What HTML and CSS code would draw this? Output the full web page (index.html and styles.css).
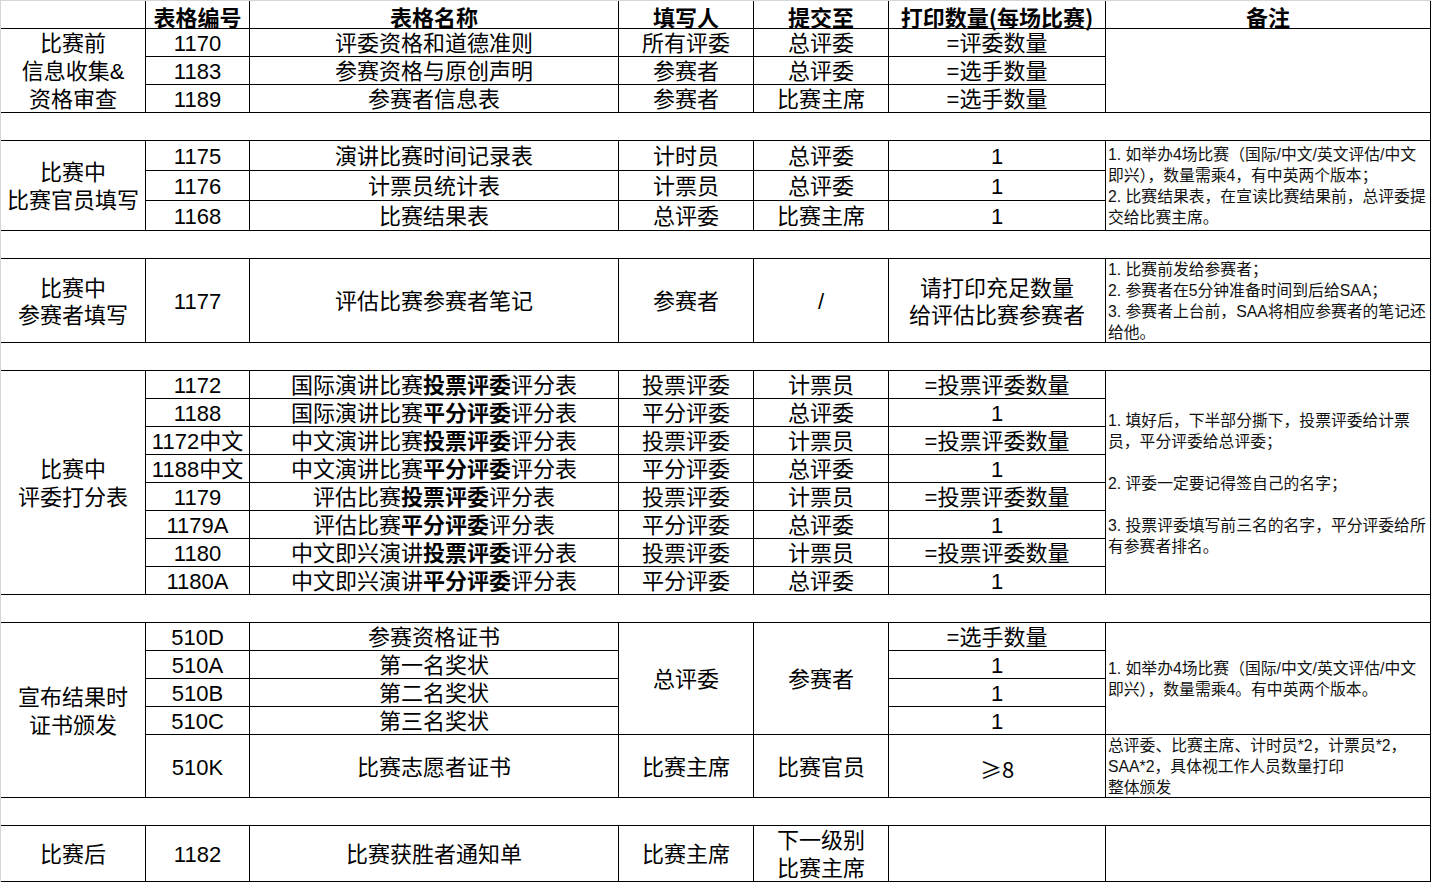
FILE: index.html
```html
<!DOCTYPE html>
<html lang="zh-CN">
<head>
<meta charset="utf-8">
<title>表格</title>
<link rel="stylesheet" href="styles.css">
</head>
<body>
<div class="sheet">
  <div class="hd"></div>
  <div class="hd">表格编号</div>
  <div class="hd">表格名称</div>
  <div class="hd">填写人</div>
  <div class="hd">提交至</div>
  <div class="hd">打印数量(每场比赛)</div>
  <div class="hd">备注</div>

  <div class="c s3 ml"><span>比赛前<br>信息收集&amp;<br>资格审查</span></div>
  <div class="c">1170</div><div class="c">评委资格和道德准则</div><div class="c">所有评委</div><div class="c">总评委</div><div class="c">=评委数量</div>
  <div class="note s3"></div>
  <div class="c">1183</div><div class="c">参赛资格与原创声明</div><div class="c">参赛者</div><div class="c">总评委</div><div class="c">=选手数量</div>
  <div class="c">1189</div><div class="c">参赛者信息表</div><div class="c">参赛者</div><div class="c">比赛主席</div><div class="c">=选手数量</div>

  <div class="gap"></div>

  <div class="c s3 ml"><span>比赛中<br>比赛官员填写</span></div>
  <div class="c">1175</div><div class="c">演讲比赛时间记录表</div><div class="c">计时员</div><div class="c">总评委</div><div class="c">1</div>
  <div class="note s3"><span>1. 如举办4场比赛（国际/中文/英文评估/中文<br>即兴），数量需乘4，有中英两个版本；<br>2. 比赛结果表，在宣读比赛结果前，总评委提<br>交给比赛主席。</span></div>
  <div class="c">1176</div><div class="c">计票员统计表</div><div class="c">计票员</div><div class="c">总评委</div><div class="c">1</div>
  <div class="c">1168</div><div class="c">比赛结果表</div><div class="c">总评委</div><div class="c">比赛主席</div><div class="c">1</div>

  <div class="gap"></div>

  <div class="c ml ml27"><span>比赛中<br>参赛者填写</span></div>
  <div class="c">1177</div><div class="c">评估比赛参赛者笔记</div><div class="c">参赛者</div><div class="c">/</div>
  <div class="c ml ml27"><span>请打印充足数量<br>给评估比赛参赛者</span></div>
  <div class="note"><span>1. 比赛前发给参赛者；<br>2. 参赛者在5分钟准备时间到后给SAA；<br>3. 参赛者上台前，SAA将相应参赛者的笔记还<br>给他。</span></div>

  <div class="gap"></div>

  <div class="c s8 ml"><span>比赛中<br>评委打分表</span></div>
  <div class="c">1172</div><div class="c"><span>国际演讲比赛<b>投票评委</b>评分表</span></div><div class="c">投票评委</div><div class="c">计票员</div><div class="c">=投票评委数量</div>
  <div class="note s8"><span>1. 填好后，下半部分撕下，投票评委给计票<br>员，平分评委给总评委；<br>&nbsp;<br>2. 评委一定要记得签自己的名字；<br>&nbsp;<br>3. 投票评委填写前三名的名字，平分评委给所<br>有参赛者排名。</span></div>
  <div class="c">1188</div><div class="c"><span>国际演讲比赛<b>平分评委</b>评分表</span></div><div class="c">平分评委</div><div class="c">总评委</div><div class="c">1</div>
  <div class="c">1172中文</div><div class="c"><span>中文演讲比赛<b>投票评委</b>评分表</span></div><div class="c">投票评委</div><div class="c">计票员</div><div class="c">=投票评委数量</div>
  <div class="c">1188中文</div><div class="c"><span>中文演讲比赛<b>平分评委</b>评分表</span></div><div class="c">平分评委</div><div class="c">总评委</div><div class="c">1</div>
  <div class="c">1179</div><div class="c"><span>评估比赛<b>投票评委</b>评分表</span></div><div class="c">投票评委</div><div class="c">计票员</div><div class="c">=投票评委数量</div>
  <div class="c">1179A</div><div class="c"><span>评估比赛<b>平分评委</b>评分表</span></div><div class="c">平分评委</div><div class="c">总评委</div><div class="c">1</div>
  <div class="c">1180</div><div class="c"><span>中文即兴演讲<b>投票评委</b>评分表</span></div><div class="c">投票评委</div><div class="c">计票员</div><div class="c">=投票评委数量</div>
  <div class="c">1180A</div><div class="c"><span>中文即兴演讲<b>平分评委</b>评分表</span></div><div class="c">平分评委</div><div class="c">总评委</div><div class="c">1</div>

  <div class="gap"></div>

  <div class="c s5 ml"><span>宣布结果时<br>证书颁发</span></div>
  <div class="c">510D</div><div class="c">参赛资格证书</div>
  <div class="c s4">总评委</div><div class="c s4">参赛者</div>
  <div class="c">=选手数量</div>
  <div class="note s4"><span>1. 如举办4场比赛（国际/中文/英文评估/中文<br>即兴），数量需乘4。有中英两个版本。</span></div>
  <div class="c">510A</div><div class="c">第一名奖状</div><div class="c">1</div>
  <div class="c">510B</div><div class="c">第二名奖状</div><div class="c">1</div>
  <div class="c">510C</div><div class="c">第三名奖状</div><div class="c">1</div>
  <div class="c">510K</div><div class="c">比赛志愿者证书</div><div class="c">比赛主席</div><div class="c">比赛官员</div><div class="c cjk">≥8</div>
  <div class="note"><span>总评委、比赛主席、计时员*2，计票员*2，<br>SAA*2，具体视工作人员数量打印<br>整体颁发</span></div>

  <div class="gap"></div>

  <div class="c">比赛后</div>
  <div class="c">1182</div><div class="c">比赛获胜者通知单</div><div class="c">比赛主席</div>
  <div class="c ml"><span>下一级别<br>比赛主席</span></div>
  <div class="c"></div>
  <div class="note"></div>
</div>
</body>
</html>
```

FILE: styles.css
```css
html, body {
  margin: 0;
  padding: 0;
  background: #ffffff;
}

body {
  width: 1431px;
  height: 882px;
  overflow: hidden;
  font-family: "Liberation Sans", "Noto Sans CJK SC", sans-serif;
  color: #000000;
}

.sheet {
  display: grid;
  grid-template-columns: 145px 104px 369px 135px 135px 217px 325px;
  grid-template-rows:
    28px
    28px 28px 28px
    28px
    30px 30px 30px
    28px
    84px
    28px
    28px 28px 28px 28px 28px 28px 28px 28px
    28px
    28px 28px 28px 28px 63px
    28px
    56px;
  border-left: 1px solid #d6d6d6;
  border-top: 1px solid #d6d6d6;
  width: 1431px;
  box-sizing: border-box;
}

.sheet > div {
  box-sizing: border-box;
  border-right: 1px solid #000000;
  border-bottom: 1px solid #000000;
  min-width: 0;
}

.hd {
  display: flex;
  align-items: center;
  justify-content: center;
  font-family: "Noto Sans CJK SC", sans-serif;
  font-weight: 700;
  font-size: 22px;
  line-height: 24px;
  padding-top: 2px;
  white-space: nowrap;
}

.c {
  display: flex;
  align-items: center;
  justify-content: center;
  text-align: center;
  font-size: 22px;
  line-height: 24px;
  padding-top: 3px;
  white-space: nowrap;
}

.c b {
  font-weight: 700;
}

.cjk {
  font-family: "Noto Sans CJK SC", sans-serif;
}

.c.ml {
  line-height: 28px;
}

.c.ml27 {
  line-height: 27px;
}

.note {
  display: flex;
  flex-direction: column;
  justify-content: center;
  font-family: "Liberation Sans", "Noto Sans CJK SC", sans-serif;
  font-size: 15.8px;
  line-height: 21px;
  padding-left: 2px;
  padding-top: 1px;
  white-space: nowrap;
  color: #111111;
}

.gap {
  grid-column: 1 / -1;
}

.s3 { grid-row: span 3; }
.s4 { grid-row: span 4; }
.s5 { grid-row: span 5; }
.s8 { grid-row: span 8; }
```
